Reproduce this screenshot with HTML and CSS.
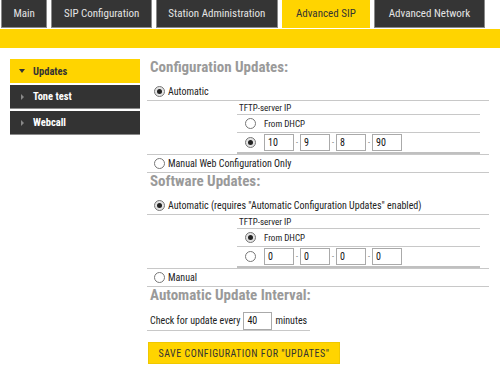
FILE: index.html
```html
<!DOCTYPE html>
<html>
<head>
  <title>Advanced SIP - Updates</title>
  <link rel="stylesheet" href="styles.css">
</head>
<body>
  <div class="tabs">
    <div class="tab">Main</div>
    <div class="tab">SIP Configuration</div>
    <div class="tab">Station Administration</div>
    <div class="tab active">Advanced SIP</div>
    <div class="tab">Advanced Network</div>
  </div>
  <div class="bar"></div>

  <div class="page">
    <div class="side">
      <div class="side-item active"><span class="arrow down"></span>Updates</div>
      <div class="side-item"><span class="arrow"></span>Tone test</div>
      <div class="side-item"><span class="arrow"></span>Webcall</div>
    </div>

    <div class="content">
      <h2>Configuration Updates:</h2>
      <div class="row">
        <input type="radio" name="cfg" checked>
        <label>Automatic</label>
      </div>
      <div class="row sub">
        <div class="inner">
          <div class="irow head">TFTP-server IP</div>
          <div class="irow">
            <input type="radio" name="cfgip">
            <label>From DHCP</label>
          </div>
          <div class="irow">
            <input type="radio" name="cfgip" checked>
            <div class="ip">
              <input type="text" value="10"><span>-</span>
              <input type="text" value="9"><span>-</span>
              <input type="text" value="8"><span>-</span>
              <input type="text" value="90">
            </div>
          </div>
        </div>
      </div>
      <div class="row">
        <input type="radio" name="cfg">
        <label>Manual Web Configuration Only</label>
      </div>

      <h2>Software Updates:</h2>
      <div class="row">
        <input type="radio" name="sw" checked>
        <label>Automatic (requires "Automatic Configuration Updates" enabled)</label>
      </div>
      <div class="row sub">
        <div class="inner">
          <div class="irow head">TFTP-server IP</div>
          <div class="irow">
            <input type="radio" name="swip" checked>
            <label>From DHCP</label>
          </div>
          <div class="irow">
            <input type="radio" name="swip">
            <div class="ip">
              <input type="text" value="0"><span>-</span>
              <input type="text" value="0"><span>-</span>
              <input type="text" value="0"><span>-</span>
              <input type="text" value="0">
            </div>
          </div>
        </div>
      </div>
      <div class="row">
        <input type="radio" name="sw">
        <label>Manual</label>
      </div>

      <h2>Automatic Update Interval:</h2>
      <div class="row interval">
        <label>Check for update every</label>
        <input type="text" class="mins" value="40">
        <label>minutes</label>
      </div>

      <button class="save">Save configuration for "Updates"</button>
    </div>
  </div>
</body>
</html>
```

FILE: styles.css
```css
body {
  margin: 0;
  font-family: "Roboto Condensed", "Liberation Sans Narrow", Roboto, sans-serif;
  font-stretch: condensed;
  font-size: 10px;
  color: #222;
  background: #fff;
  white-space: nowrap;
}
.tabs {
  display: flex;
  gap: 4px;
  padding-left: 1px;
  height: 28px;
}
.tab {
  background: #353535;
  color: #e4e4e4;
  border: 1px solid #8a8a8a;
  border-top: none;
  font-size: 11px;
  padding: 0 11.5px;
  line-height: 27px;
  height: 27px;
}
.tab.active {
  background: #ffd400;
  color: #333;
  border-color: #ffd400;
  padding: 0 13px;
}
.tab:last-child {
  padding: 0 14px;
}
.bar {
  margin-top: 1px;
  height: 19px;
  background: #ffd400;
}
.page {
  display: flex;
  gap: 7px;
  padding: 11px 0 0 10px;
}
.side {
  width: 130px;
  display: flex;
  flex-direction: column;
  gap: 2px;
}
.side-item {
  height: 24px;
  background: #333;
  color: #fff;
  font-weight: bold;
  font-size: 10.5px;
  display: flex;
  align-items: center;
  border-bottom: 1px solid #8a8a8a;
  box-sizing: border-box;
}
.side-item.active {
  background: #ffd400;
  color: #333;
  border-bottom: none;
}
.arrow {
  width: 0;
  height: 0;
  margin: 0 9px 0 11px;
  border-top: 3px solid transparent;
  border-bottom: 3px solid transparent;
  border-left: 3px solid #888;
}
.arrow.down {
  margin: 0 8px 0 9px;
  border-left: 3px solid transparent;
  border-right: 3px solid transparent;
  border-top: 4px solid #333;
  border-bottom: none;
}
.content {
  width: 342px;
}
h2 {
  margin: 0;
  font-size: 15px;
  font-weight: bold;
  color: #9a9a9a;
  height: 24px;
  line-height: 17px;
  padding-left: 3px;
}
.row {
  display: flex;
  align-items: center;
  gap: 3px;
  padding-left: 7px;
  height: 17px;
  border-bottom: 1px solid #c8c8c8;
}
.row.sub {
  height: auto;
  padding-left: 90px;
  padding-right: 9px;
}
.inner {
  flex: 1;
}
.irow {
  display: flex;
  align-items: center;
  gap: 8px;
  padding-left: 8px;
  height: 17px;
  font-size: 9px;
  border-bottom: 1px solid #c8c8c8;
}
.irow.head {
  height: 13px;
  padding-left: 2px;
  font-size: 9px;
}
.irow:last-child {
  height: 19px;
  border-bottom: 2px solid #c0c0c0;
}
input[type="radio"] {
  appearance: none;
  margin: 0;
  width: 11px;
  height: 11px;
  border: 1px solid #777;
  border-radius: 50%;
  background: #fff;
  box-sizing: border-box;
  position: relative;
}
input[type="radio"]:checked {
  background: #e4e4e4;
}
input[type="radio"]:checked::after {
  content: "";
  position: absolute;
  left: 2px;
  top: 2px;
  width: 5px;
  height: 5px;
  border-radius: 50%;
  background: #222;
}
.ip {
  display: flex;
  align-items: center;
  gap: 1px;
}
.ip span {
  font-size: 8px;
  color: #555;
  padding: 0 1px;
}
input[type="text"] {
  font-family: inherit;
  font-stretch: condensed;
  font-size: 10px;
  width: 30px;
  height: 17px;
  box-sizing: border-box;
  border: 1px solid #aaa;
  padding: 0 3px;
  margin: 0;
  color: #111;
}
.row.interval {
  width: 160px;
  height: 19px;
  padding-left: 3px;
  gap: 3px;
}
.row.interval input.mins {
  width: 29px;
  height: 18px;
}
.save {
  margin-top: 11px;
  margin-left: 1px;
  background: #ffd400;
  border: 1px solid #f0c800;
  color: #333;
  font-family: inherit;
  font-stretch: condensed;
  font-size: 10px;
  text-transform: uppercase;
  letter-spacing: 0.5px;
  height: 22px;
  width: 192px;
  padding: 0;
}
```
